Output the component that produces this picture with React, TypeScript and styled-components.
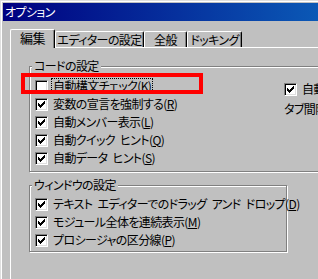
import React from 'react';
import styled, { createGlobalStyle } from 'styled-components';

const FONT = `"MS UI Gothic", "Noto Sans CJK JP", "Noto Sans", sans-serif`;

const Global = createGlobalStyle`
  html, body { margin: 0; padding: 0; background: #c0c0c0; }
  body { width: 318px; height: 279px; overflow: hidden; }
`;

const Window = styled.div`
  width: 318px;
  height: 279px;
  box-sizing: border-box;
  padding: 2px 0 0 2px;
  background: #c0c0c0;
  box-shadow: inset 1px 1px 0 #dfdfdf, inset 2px 2px 0 #ffffff;
  overflow: hidden;
  display: flex;
  flex-direction: column;
  font-family: ${FONT};
  font-size: 12px;
  line-height: 14px;
  letter-spacing: -0.6px;
  word-spacing: 3px;
  font-feature-settings: "palt";
  color: #000;
`;

const TitleBar = styled.div`
  flex: none;
  height: 18px;
  margin-left: 1px;
  margin-top: 1px;
  padding-left: 2px;
  display: flex;
  align-items: center;
  color: #fff;
  background: linear-gradient(90deg, #000080 0px, #1084d0 470px);
  white-space: nowrap;
`;

const Body = styled.div`
  flex: 1;
  display: flex;
  flex-direction: column;
  padding: 8px 0 0 8px;
  min-height: 0;
`;

const TabStrip = styled.div`
  flex: none;
  display: flex;
  align-items: flex-end;
  height: 19px;
  margin-bottom: -1px;
  position: relative;
  z-index: 2;
`;

const Tab = styled.div<{ $active?: boolean; $w: number }>`
  box-sizing: border-box;
  width: ${(p) => p.$w}px;
  height: ${(p) => (p.$active ? 19 : 16)}px;
  margin-bottom: ${(p) => (p.$active ? 0 : 1)}px;
  padding-bottom: ${(p) => (p.$active ? 2 : 0)}px;
  display: flex;
  align-items: center;
  justify-content: center;
  background: #c0c0c0;
  border-top: 1px solid #fff;
  border-left: 1px solid #fff;
  border-right: 1px solid #000;
  border-top-left-radius: 2px;
  border-top-right-radius: 2px;
  box-shadow: inset -1px 0 0 #808080;
  white-space: nowrap;
  font-size: ${(p) => (p.$active ? 13 : 12)}px;
`;

const Panel = styled.div`
  flex: 1;
  border-top: 1px solid #fff;
  border-left: 1px solid #fff;
  padding: 18px 0 0 18px;
  display: flex;
  flex-direction: column;
  align-items: flex-start;
`;

const Group = styled.div<{ $w: number; $pt: number; $pb: number }>`
  position: relative;
  flex: none;
  box-sizing: border-box;
  width: ${(p) => p.$w}px;
  padding: ${(p) => p.$pt}px 0 ${(p) => p.$pb}px 5px;
  border: 1px solid #808080;
  box-shadow: inset 1px 1px 0 #fff, 1px 1px 0 #fff;
  & + & {
    margin-top: 13px;
  }
`;

const GroupLabel = styled.span`
  position: absolute;
  top: -8px;
  left: 2px;
  padding: 0 2px;
  background: #c0c0c0;
  white-space: nowrap;
`;

const Columns = styled.div`
  display: flex;
`;

const LeftCol = styled.div`
  width: 249px;
  flex: none;
`;

const RightCol = styled.div`
  margin-top: 3px;
  display: flex;
  flex-direction: column;
`;

const Row = styled.div`
  position: relative;
  height: 18px;
  display: flex;
  align-items: center;
  white-space: nowrap;
`;

const Box = styled.span`
  position: relative;
  flex: none;
  box-sizing: border-box;
  width: 13px;
  height: 13px;
  background: #fff;
  border-top: 1px solid #808080;
  border-left: 1px solid #808080;
  border-right: 1px solid #fff;
  border-bottom: 1px solid #fff;
  box-shadow: inset 1px 1px 0 #000, inset -1px -1px 0 #dfdfdf;
  & > svg {
    position: absolute;
    left: 2px;
    top: 2px;
  }
`;

const Caption = styled.span<{ $focus?: boolean }>`
  margin-left: 3px;
  padding: 0 1px;
  border: 1px dotted ${(p) => (p.$focus ? '#000' : 'transparent')};
  line-height: 14px;
`;

const PlainText = styled.span`
  margin-top: 4px;
  white-space: nowrap;
`;

const Highlight = styled.div`
  position: absolute;
  left: -14px;
  top: -4px;
  width: 182px;
  height: 21px;
  box-sizing: border-box;
  border: 4px solid #ff0000;
  pointer-events: none;
  z-index: 3;
`;

const CheckMark = () => (
  <svg width="7" height="7" viewBox="0 0 7 7" shapeRendering="crispEdges">
    {[2, 3, 4, 3, 2, 1, 0].map((y, x) => (
      <rect key={x} x={x} y={y} width={1} height={3} fill="#000" />
    ))}
  </svg>
);

type CheckProps = {
  checked?: boolean;
  focus?: boolean;
  children: React.ReactNode;
  highlight?: boolean;
};

const Check = ({ checked, focus, children, highlight }: CheckProps) => (
  <Row>
    <Box>{checked && <CheckMark />}</Box>
    <Caption $focus={focus}>{children}</Caption>
    {highlight && <Highlight />}
  </Row>
);

export default function App() {
  return (
    <>
      <Global />
      <Window>
        <TitleBar>オプション</TitleBar>
        <Body>
          <TabStrip>
            <Tab $active $w={45}>編集</Tab>
            <Tab $w={89}>エディターの設定</Tab>
            <Tab $w={43}>全般</Tab>
            <Tab $w={55}>ドッキング</Tab>
          </TabStrip>
          <Panel>
            <Group $w={420} $pt={10} $pb={4}>
              <GroupLabel>コードの設定</GroupLabel>
              <Columns>
                <LeftCol>
                  <Check focus highlight>
                    自動構文チェック(<u>K</u>)
                  </Check>
                  <Check checked>
                    変数の宣言を強制する(<u>R</u>)
                  </Check>
                  <Check checked>
                    自動メンバー表示(<u>L</u>)
                  </Check>
                  <Check checked>
                    自動クイック ヒント(<u>Q</u>)
                  </Check>
                  <Check checked>
                    自動データ ヒント(<u>S</u>)
                  </Check>
                </LeftCol>
                <RightCol>
                  <Check checked>
                    自動インデント(<u>I</u>)
                  </Check>
                  <PlainText>タブ間隔(<u>T</u>):</PlainText>
                </RightCol>
              </Columns>
            </Group>
            <Group $w={258} $pt={9} $pb={2}>
              <GroupLabel>ウィンドウの設定</GroupLabel>
              <Check checked>
                テキスト エディターでのドラッグ アンド ドロップ(<u>D</u>)
              </Check>
              <Check checked>
                モジュール全体を連続表示(<u>M</u>)
              </Check>
              <Check checked>
                プロシージャの区分線(<u>P</u>)
              </Check>
            </Group>
          </Panel>
        </Body>
      </Window>
    </>
  );
}
